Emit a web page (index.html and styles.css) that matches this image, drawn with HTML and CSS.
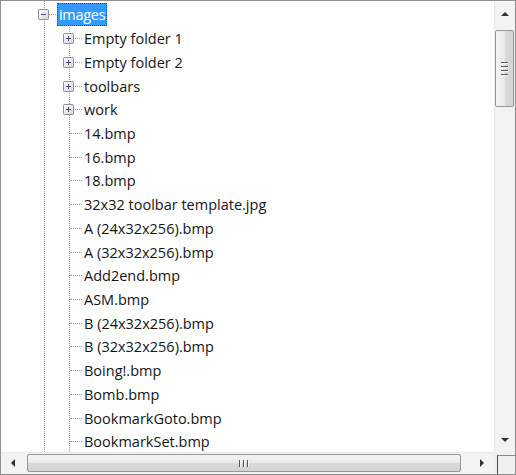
FILE: index.html
```html
<!DOCTYPE html>
<html>
<head>
<meta charset="utf-8">
<link rel="stylesheet" href="styles.css">
</head>
<body>
<div class="tree">
  <div class="viewport">
    <ul class="level1">
      <li>
        <div class="row">
          <svg class="exp" width="11" height="11" viewBox="0 0 11 11"><defs><linearGradient id="g" x1="0" y1="0" x2="1" y2="1"><stop offset="0" stop-color="#ffffff"/><stop offset="1" stop-color="#d4d4d4"/></linearGradient></defs><rect x="0.5" y="0.5" width="10" height="10" rx="1" fill="url(#g)" stroke="#8e8f8f"/><path d="M3 5.5h5" stroke="#3b4f78" stroke-width="1"/></svg>
          <span class="dash d1"></span>
          <span class="label selected">images</span>
        </div>
        <ul class="level2">
          <li class="row"><svg class="exp" width="11" height="11" viewBox="0 0 11 11"><rect x="0.5" y="0.5" width="10" height="10" rx="1" fill="url(#g)" stroke="#8e8f8f"/><path d="M3 5.5h5M5.5 3v5" stroke="#3b4f78" stroke-width="1"/></svg><span class="dash d2"></span><span class="label">Empty folder 1</span></li>
          <li class="row"><svg class="exp" width="11" height="11" viewBox="0 0 11 11"><rect x="0.5" y="0.5" width="10" height="10" rx="1" fill="url(#g)" stroke="#8e8f8f"/><path d="M3 5.5h5M5.5 3v5" stroke="#3b4f78" stroke-width="1"/></svg><span class="dash d2"></span><span class="label">Empty folder 2</span></li>
          <li class="row"><svg class="exp" width="11" height="11" viewBox="0 0 11 11"><rect x="0.5" y="0.5" width="10" height="10" rx="1" fill="url(#g)" stroke="#8e8f8f"/><path d="M3 5.5h5M5.5 3v5" stroke="#3b4f78" stroke-width="1"/></svg><span class="dash d2"></span><span class="label">toolbars</span></li>
          <li class="row"><svg class="exp" width="11" height="11" viewBox="0 0 11 11"><rect x="0.5" y="0.5" width="10" height="10" rx="1" fill="url(#g)" stroke="#8e8f8f"/><path d="M3 5.5h5M5.5 3v5" stroke="#3b4f78" stroke-width="1"/></svg><span class="dash d2"></span><span class="label">work</span></li>
          <li class="row"><span class="dash d3"></span><span class="label">14.bmp</span></li>
          <li class="row"><span class="dash d3"></span><span class="label">16.bmp</span></li>
          <li class="row"><span class="dash d3"></span><span class="label">18.bmp</span></li>
          <li class="row"><span class="dash d3"></span><span class="label">32x32 toolbar template.jpg</span></li>
          <li class="row"><span class="dash d3"></span><span class="label">A (24x32x256).bmp</span></li>
          <li class="row"><span class="dash d3"></span><span class="label">A (32x32x256).bmp</span></li>
          <li class="row"><span class="dash d3"></span><span class="label">Add2end.bmp</span></li>
          <li class="row"><span class="dash d3"></span><span class="label">ASM.bmp</span></li>
          <li class="row"><span class="dash d3"></span><span class="label">B (24x32x256).bmp</span></li>
          <li class="row"><span class="dash d3"></span><span class="label">B (32x32x256).bmp</span></li>
          <li class="row"><span class="dash d3"></span><span class="label">Boing!.bmp</span></li>
          <li class="row"><span class="dash d3"></span><span class="label">Bomb.bmp</span></li>
          <li class="row"><span class="dash d3"></span><span class="label">BookmarkGoto.bmp</span></li>
          <li class="row"><span class="dash d3"></span><span class="label">BookmarkSet.bmp</span></li>
        </ul>
      </li>
    </ul>
  </div>
  <div class="vscroll">
    <div class="vbtn"><span class="arrow up"></span></div>
    <div class="vtrack">
      <div class="vthumb"><span class="grip-h"></span><span class="grip-h"></span><span class="grip-h"></span><span class="grip-h"></span></div>
    </div>
    <div class="vbtn"><span class="arrow down"></span></div>
  </div>
  <div class="hscroll">
    <div class="hbtn"><span class="arrow left"></span></div>
    <div class="htrack">
      <div class="hthumb"><span class="grip-v"></span><span class="grip-v"></span><span class="grip-v"></span></div>
    </div>
    <div class="hbtn"><span class="arrow right"></span></div>
  </div>
  <div class="corner"><span class="corner-line"></span></div>
</div>
</body>
</html>
```
FILE: styles.css
```css
html, body {
  margin: 0;
  padding: 0;
  background: #ffffff;
}

.tree {
  width: 516px;
  height: 475px;
  box-sizing: border-box;
  border: 1px solid #8e8f8f;
  display: grid;
  grid-template-columns: 493px 21px;
  grid-template-rows: 451px 22px;
  background: #ffffff;
  overflow: hidden;
  font-family: "Open Sans", "Noto Sans", sans-serif;
  font-size: 14.5px;
  color: #151515;
}

.viewport {
  overflow: hidden;
}

.level1 {
  list-style: none;
  margin: 0 0 0 43px;
  padding: 2px 0 0 0;
  border-left: 1px dotted #a0a0a0;
}

.level1 > li {
  margin: 0;
  padding: 0;
}

.level2 {
  list-style: none;
  margin: 0 0 0 24px;
  padding: 0 0 40px 0;
  border-left: 1px dotted #a0a0a0;
}

.row {
  height: 23.72px;
  display: flex;
  align-items: center;
  white-space: nowrap;
}

.exp {
  flex: none;
  margin-left: -7px;
  display: block;
}

.dash {
  flex: none;
  height: 0;
  border-top: 1px dotted #a0a0a0;
}

.d1 {
  width: 9px;
}

.d2 {
  width: 7px;
  margin-left: 1px;
}

.d3 {
  width: 12px;
}

.label {
  padding: 0 2px;
  line-height: 21px;
  border: 1px solid transparent;
  margin-left: -1px;
}

.selected {
  background: #3399ff;
  color: #ffffff;
  border: 1px dotted #5a4a20;
  padding: 0 1px;
  letter-spacing: -0.3px;
}

/* vertical scrollbar */
.vscroll {
  display: flex;
  flex-direction: column;
  background: linear-gradient(to right, #e6e6e6, #f3f3f3 2px, #f3f3f3);
}

.vbtn {
  height: 24px;
  flex: none;
  display: flex;
  align-items: center;
  justify-content: center;
}

.vbtn:first-child {
  padding-top: 2px;
  height: 22px;
}

.vtrack {
  flex: 1;
  padding: 5px 1px 0 1px;
}

.vthumb {
  height: 77px;
  box-sizing: border-box;
  border: 1px solid #979797;
  border-radius: 2px;
  background: linear-gradient(to right, #f4f4f4, #e9e9e9 50%, #d9d9d9 51%, #d4d4d4);
  display: flex;
  flex-direction: column;
  align-items: center;
  justify-content: center;
  gap: 2px;
}

.grip-h {
  width: 7px;
  height: 1px;
  background: #555555;
  border-bottom: 1px solid #f4f4f4;
}

/* horizontal scrollbar */
.hscroll {
  display: flex;
  background: linear-gradient(to bottom, #e6e6e6, #f3f3f3 2px, #f3f3f3);
}

.hbtn {
  width: 24px;
  flex: none;
  display: flex;
  align-items: center;
  justify-content: center;
}

.htrack {
  flex: 1;
  padding: 2px 9px 2px 2px;
  display: flex;
}

.hthumb {
  width: 434px;
  box-sizing: border-box;
  border: 1px solid #979797;
  border-radius: 2px;
  background: linear-gradient(to bottom, #f4f4f4, #e9e9e9 50%, #d9d9d9 51%, #d4d4d4);
  display: flex;
  align-items: center;
  justify-content: center;
  gap: 2px;
}

.grip-v {
  width: 1px;
  height: 7px;
  background: #555555;
  border-right: 1px solid #f4f4f4;
}

.arrow {
  width: 0;
  height: 0;
  display: block;
}

.arrow.up {
  border-left: 4px solid transparent;
  border-right: 4px solid transparent;
  border-bottom: 4px solid #303030;
}

.arrow.down {
  border-left: 4px solid transparent;
  border-right: 4px solid transparent;
  border-top: 4px solid #303030;
}

.arrow.left {
  border-top: 4px solid transparent;
  border-bottom: 4px solid transparent;
  border-right: 4px solid #303030;
}

.arrow.right {
  border-top: 4px solid transparent;
  border-bottom: 4px solid transparent;
  border-left: 4px solid #303030;
}

.corner {
  background: #f0f0f0;
  padding: 3px 0 0 3px;
  box-sizing: border-box;
}

.corner-line {
  display: block;
  height: 100%;
  border-left: 1px solid #4a4a4a;
  border-top: 1px solid #8a8a8a;
}
```
